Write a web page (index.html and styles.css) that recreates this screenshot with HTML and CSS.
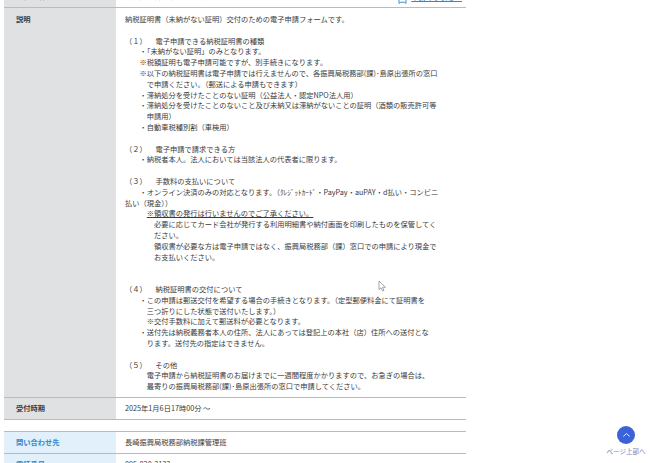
FILE: index.html
```html
<!DOCTYPE html>
<html lang="ja">
<head>
  <meta charset="UTF-8">
  <meta name="viewport" content="width=device-width, initial-scale=1.0"/>
  <title>納税証明書 電子申請</title>
  <link rel="stylesheet" href="styles.css">
</head>
<body>
  <div class="info-table first-table">
    <div class="row row-cut">
      <div class="label">手続き名</div>
      <div class="value value-cut">
        <span>納税証明書（未納がない証明）</span>
        <a class="help-link" href="#">
          <svg class="help-icon" viewBox="0 0 9 6" aria-hidden="true"><path d="M1 0V5.4L2.8 4.2H6.2L8 5.4V0" fill="none" stroke="#3f8fc4" stroke-width="1"/></svg>
          <span>申請の手引きへ</span>
        </a>
      </div>
    </div>
    <div class="row">
      <div class="label label-top">説明</div>
      <div class="value value-long">
        納税証明書（未納がない証明）交付のための電子申請フォームです。<br>
        <br>
        （１） &#12288;電子申請できる納税証明書の種類<br>
        &#12288;&#12288;・「未納がない証明」のみとなります。<br>
        &#12288;&#12288;※税額証明も電子申請可能ですが、別手続きになります。<br>
        &#12288;&#12288;※以下の納税証明書は電子申請では行えませんので、各振興局税務部(課)･島原出張所の窓口<br>
        &#12288;&#12288;&#12288;で申請ください。（郵送による申請もできます）<br>
        &#12288;&#12288;・滞納処分を受けたことのない証明（公益法人・認定NPO法人用）<br>
        &#12288;&#12288;・滞納処分を受けたことのないこと及び未納又は滞納がないことの証明（酒類の販売許可等<br>
        &#12288;&#12288;&#12288;申請用）<br>
        &#12288;&#12288;・自動車税種別割（車検用）<br>
        <br>
        （２） &#12288;電子申請で請求できる方<br>
        &#12288;&#12288;・納税者本人。法人においては当該法人の代表者に限ります。<br>
        <br>
        （３） &#12288;手数料の支払いについて<br>
        &#12288;&#12288;・オンライン決済のみの対応となります。（ｸﾚｼﾞｯﾄｶｰﾄﾞ・PayPay・auPAY・d払い・コンビニ<br>
        払い（現金））<br>
        &#12288;&#12288;&#12288;<u>※領収書の発行は行いませんのでご了承ください。</u><br>
        &#12288;&#12288;&#12288;&#12288;必要に応じてカード会社が発行する利用明細書や納付画面を印刷したものを保管してく<br>
        &#12288;&#12288;&#12288;&#12288;ださい。<br>
        &#12288;&#12288;&#12288;&#12288;領収書が必要な方は電子申請ではなく、振興局税務部（課）窓口での申請により現金で<br>
        &#12288;&#12288;&#12288;&#12288;お支払いください。<br>
        <br>
        <br>
        （４） &#12288;納税証明書の交付について<br>
        &#12288;&#12288;・この申請は郵送交付を希望する場合の手続きとなります。（定型郵便料金にて証明書を<br>
        &#12288;&#12288;&#12288;三つ折りにした状態で送付いたします。）<br>
        &#12288;&#12288;&#12288;※交付手数料に加えて郵送料が必要となります。<br>
        &#12288;&#12288;・送付先は納税義務者本人の住所、法人にあっては登記上の本社（店）住所への送付とな<br>
        &#12288;&#12288;&#12288;ります。送付先の指定はできません。<br>
        <br>
        （５） &#12288;その他<br>
        &#12288;&#12288;&#12288;電子申請から納税証明書のお届けまでに一週間程度かかりますので、お急ぎの場合は、<br>
        &#12288;&#12288;&#12288;最寄りの振興局税務部(課)･島原出張所の窓口で申請してください。
      </div>
    </div>
    <div class="row row-short">
      <div class="label">受付時期</div>
      <div class="value">2025年1月6日17時00分 ～</div>
    </div>
  </div>

  <div class="info-table contact-table">
    <div class="row row-short">
      <div class="label">問い合わせ先</div>
      <div class="value">長崎振興局税務部納税課管理班</div>
    </div>
    <div class="row row-short">
      <div class="label">電話番号</div>
      <div class="value">095-820-3133</div>
    </div>
  </div>

  <svg class="cursor" viewBox="0 0 9 12" aria-hidden="true"><path d="M1 1V9.6L3 7.8L4.6 11L6 10.3L4.5 7.3H7.4Z" fill="#fff" stroke="#8a8f96" stroke-width=".8"/></svg>

  <a class="to-top" href="#">
    <span class="to-top-btn">
      <svg viewBox="0 0 10 6" aria-hidden="true"><path d="M1.5 4.6L5 1.4L8.5 4.6" fill="none" stroke="#fff" stroke-width="1"/></svg>
    </span>
    <span class="to-top-text">ページ上部へ</span>
  </a>
</body>
</html>
```

FILE: styles.css
```css
:root {
  --border: #b9bbbe;
  --label-gray: #e0e1e3;
  --label-blue: #e1f0fa;
  --text: #3a3a3a;
  --blue: #2f8ac8;
}

* {
  box-sizing: border-box;
}

html,
body {
  height: 463px;
  overflow: hidden;
}

body {
  margin: 0;
  padding-left: 4px;
  background: #fff;
  color: var(--text);
  font-family: "Noto Sans CJK JP", "Noto Sans", sans-serif;
  font-size: 7.25px;
  line-height: 10.8px;
  font-variant-emoji: text;
}

.info-table {
  width: 462px;
}

.contact-table {
  margin-top: 11px;
  border-top: 1px solid var(--border);
}

.contact-table .label {
  background: var(--label-blue);
  color: var(--blue);
}

.row {
  display: flex;
  border-bottom: 1px solid var(--border);
}

.row-short {
  height: 22px;
  align-items: stretch;
}

.row-short .label,
.row-short .value {
  display: flex;
  align-items: center;
}

.row-cut {
  height: 8px;
  overflow: hidden;
}

.label {
  flex: 0 0 112px;
  padding-left: 12px;
  background: var(--label-gray);
  font-weight: 700;
}

.label-top {
  padding-top: 6px;
}

.row-cut .label {
  margin-top: -9px;
  height: 17px;
  padding-top: 0;
}

.value {
  flex: 1;
  padding-left: 9px;
  white-space: nowrap;
}

.value-long {
  padding-top: 6px;
  padding-bottom: 5px;
}

.value-cut {
  display: flex;
  justify-content: space-between;
  margin-top: -9px;
  height: 17px;
  padding-right: 4px;
}

.help-link {
  display: flex;
  align-items: center;
  gap: 4px;
  height: 12px;
  color: var(--blue);
}

.help-icon {
  width: 9px;
  height: 6px;
  margin-top: 8px;
}

.cursor {
  position: absolute;
  left: 378px;
  top: 280px;
  width: 9px;
  height: 12px;
}

.to-top {
  position: absolute;
  left: 602px;
  top: 426px;
  width: 48px;
  display: flex;
  flex-direction: column;
  align-items: center;
  gap: 3px;
  text-decoration: none;
}

.to-top-btn {
  display: flex;
  align-items: center;
  justify-content: center;
  width: 18px;
  height: 18px;
  border-radius: 50%;
  background: #3b62d6;
}

.to-top-btn svg {
  width: 9px;
  height: 6px;
}

.to-top-text {
  color: #6f86b8;
  font-size: 6.5px;
  line-height: 9px;
}
```
